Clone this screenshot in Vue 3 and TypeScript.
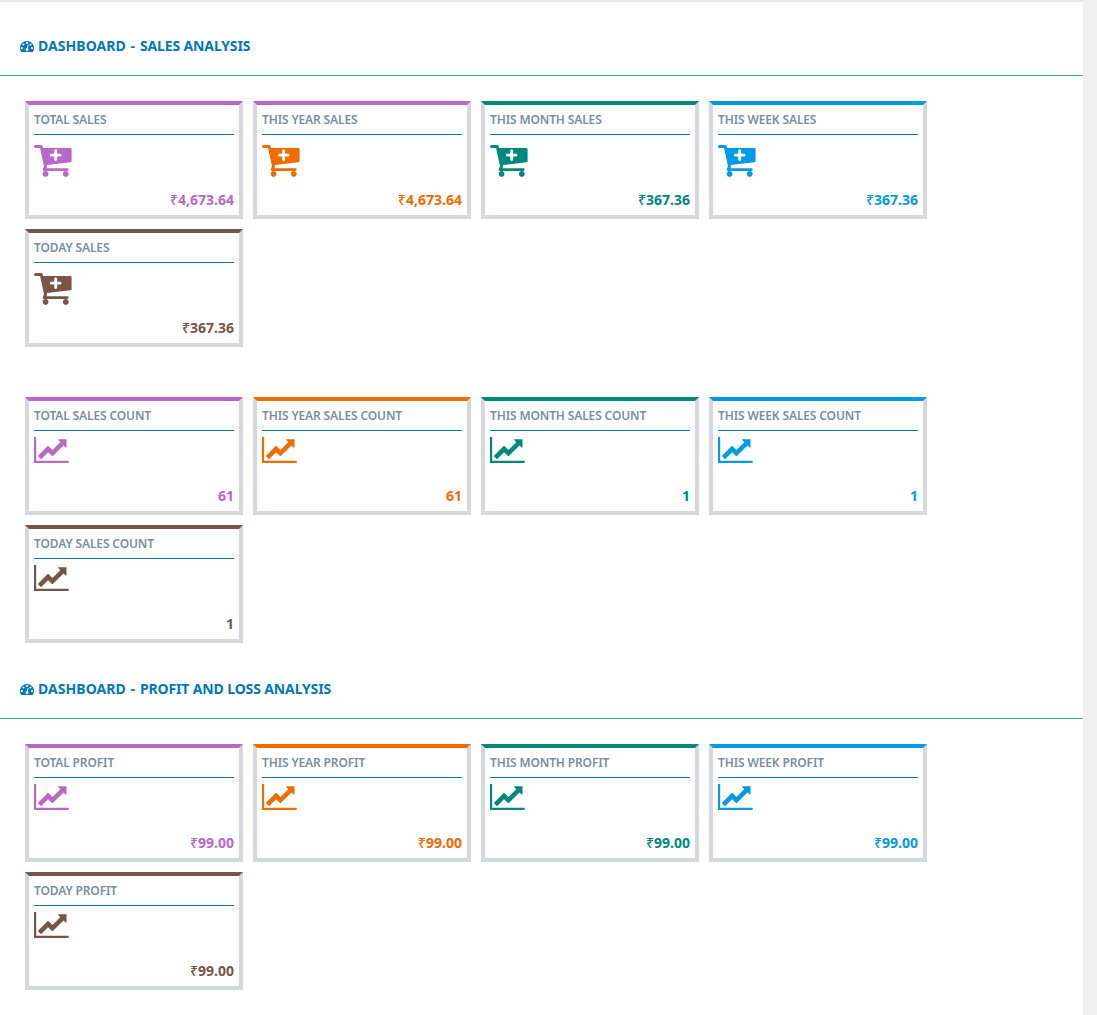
<script setup lang="ts">
type IconName = 'cart' | 'chart'

interface Card {
  title: string
  value: string
  tone: string
  edge?: string
  money?: boolean
}

interface Group {
  icon: IconName
  cards: Card[]
}

interface Section {
  name: string
  groups: Group[]
}

const icons: Record<IconName, { box: string; path: string }> = {
  cart: {
    box: '64 256 1664 1408',
    path: 'M1280 704q0-26-19-45t-45-19h-128v-128q0-26-19-45t-45-19-45 19-19 45v128h-128q-26 0-45 19t-19 45 19 45 45 19h128v128q0 26 19 45t45 19 45-19 19-45v-128h128q26 0 45-19t19-45zM704 1536q0 53-37.5 90.5t-90.5 37.5-90.5-37.5-37.5-90.5 37.5-90.5 90.5-37.5 90.5 37.5 37.5 90.5zm896 0q0 53-37.5 90.5t-90.5 37.5-90.5-37.5-37.5-90.5 37.5-90.5 90.5-37.5 90.5 37.5 37.5 90.5zm128-1088v512q0 24-16 42.5t-41 21.5l-1044 122q1 7 4.5 21.5t6 26.5 2.5 22q0 16-24 64h920q26 0 45 19t19 45-19 45-45 19h-1024q-26 0-45-19t-19-45q0-14 11-39.5t29.5-59.5 20.5-38l-177-823h-204q-26 0-45-19t-19-45 19-45 45-19h256q16 0 28.5 6.5t20 15.5 13 24.5 7.5 26.5 5.5 29.5 4.5 25.5h1201q26 0 45 19t19 45z',
  },
  chart: {
    box: '0 128 2048 1536',
    path: 'M2048 1536v128h-2048v-1536h128v1408h1920zm-128-1248v435q0 21-19.5 29.5t-35.5-7.5l-121-121-633 633q-10 10-23 10t-23-10l-233-233-416 416-192-192 585-585q10-10 23-10t23 10l233 233 464-464-121-121q-16-16-7.5-35.5t29.5-19.5h435q14 0 23 9t9 23z',
  },
}

const gauge =
  'M384 1152q0-53-37.5-90.5t-90.5-37.5-90.5 37.5-37.5 90.5 37.5 90.5 90.5 37.5 90.5-37.5 37.5-90.5zm192-448q0-53-37.5-90.5t-90.5-37.5-90.5 37.5-37.5 90.5 37.5 90.5 90.5 37.5 90.5-37.5 37.5-90.5zm428 481l101-382q6-26-7.5-48.5t-38.5-29.5-48 6.5-30 39.5l-101 382q-60 5-107 43.5t-63 98.5q-20 77 20 146t117 89 146-20 89-117q16-60-6-117t-72-91zm660-33q0-53-37.5-90.5t-90.5-37.5-90.5 37.5-37.5 90.5 37.5 90.5 90.5 37.5 90.5-37.5 37.5-90.5zm-640-640q0-53-37.5-90.5t-90.5-37.5-90.5 37.5-37.5 90.5 37.5 90.5 90.5 37.5 90.5-37.5 37.5-90.5zm448 192q0-53-37.5-90.5t-90.5-37.5-90.5 37.5-37.5 90.5 37.5 90.5 90.5 37.5 90.5-37.5 37.5-90.5zm320 448q0 261-141 483-19 29-54 29h-1402q-35 0-54-29-141-221-141-483 0-182 71-348t191-286 286-191 348-71 348 71 286 191 191 286 71 348z'

const sections: Section[] = [
  {
    name: 'SALES ANALYSIS',
    groups: [
      {
        icon: 'cart',
        cards: [
          { title: 'TOTAL SALES', value: '4,673.64', tone: 'purple', money: true },
          { title: 'THIS YEAR SALES', value: '4,673.64', tone: 'orange', edge: 'edge-purple', money: true },
          { title: 'THIS MONTH SALES', value: '367.36', tone: 'teal', money: true },
          { title: 'THIS WEEK SALES', value: '367.36', tone: 'blue', money: true },
          { title: 'TODAY SALES', value: '367.36', tone: 'brown', money: true },
        ],
      },
      {
        icon: 'chart',
        cards: [
          { title: 'TOTAL SALES COUNT', value: '61', tone: 'purple' },
          { title: 'THIS YEAR SALES COUNT', value: '61', tone: 'orange' },
          { title: 'THIS MONTH SALES COUNT', value: '1', tone: 'teal' },
          { title: 'THIS WEEK SALES COUNT', value: '1', tone: 'blue' },
          { title: 'TODAY SALES COUNT', value: '1', tone: 'brown' },
        ],
      },
    ],
  },
  {
    name: 'PROFIT AND LOSS ANALYSIS',
    groups: [
      {
        icon: 'chart',
        cards: [
          { title: 'TOTAL PROFIT', value: '99.00', tone: 'purple', money: true },
          { title: 'THIS YEAR PROFIT', value: '99.00', tone: 'orange', money: true },
          { title: 'THIS MONTH PROFIT', value: '99.00', tone: 'teal', money: true },
          { title: 'THIS WEEK PROFIT', value: '99.00', tone: 'blue', money: true },
          { title: 'TODAY PROFIT', value: '99.00', tone: 'brown', money: true },
        ],
      },
    ],
  },
]
</script>

<template>
  <div class="page">
    <main class="content">
      <section v-for="s in sections" :key="s.name">
        <h2 class="heading">
          <svg class="gauge" viewBox="0 256 1792 1408"><path :d="gauge" /></svg>
          <span><span class="lead">DASHBOARD</span> <span class="dash">-</span> <span class="name">{{ s.name }}</span></span>
        </h2>
        <div class="groups">
          <div v-for="(g, i) in s.groups" :key="i" class="cards">
            <article v-for="c in g.cards" :key="c.title" class="card" :class="[c.tone, c.edge]">
              <h3 class="title">{{ c.title }}</h3>
              <svg :class="g.icon" :viewBox="icons[g.icon].box"><path :d="icons[g.icon].path" /></svg>
              <div class="value"><span v-if="c.money" class="rupee">₹</span>{{ c.value }}</div>
            </article>
          </div>
        </div>
      </section>
    </main>
    <div class="gutter"></div>
  </div>
</template>

<style>
body {
  margin: 0;
  overflow: hidden;
}
</style>

<style scoped>
.page {
  display: flex;
  height: 1015px;
  overflow: hidden;
  background: #fff;
  font-family: 'Noto Sans', sans-serif;
}
.content {
  flex: 1;
  border-top: 2px solid #e4e9ec;
}
.gutter {
  width: 14px;
  background: #f0f0f0;
}
.heading {
  display: flex;
  align-items: center;
  gap: 4px;
  box-sizing: border-box;
  height: 74px;
  margin: 0;
  padding: 14px 20px 0;
  border-bottom: 1px solid #32b67a;
  color: #0277bd;
  font-size: 14px;
  font-weight: 700;
  line-height: 20px;
  white-space: nowrap;
}
.lead {
  letter-spacing: 0.06px;
}
.dash {
  margin: 0 1.3px 0 1px;
}
.name {
  letter-spacing: -0.13px;
}
.gauge {
  width: 14px;
  height: 11px;
  margin-top: 1px;
}
svg {
  display: block;
  fill: currentColor;
}
.groups {
  display: flex;
  flex-direction: column;
  gap: 50px;
  padding: 25px 25px 2px;
}
.cards {
  display: flex;
  flex-wrap: wrap;
  gap: 10px;
}
.card {
  display: flex;
  flex-direction: column;
  box-sizing: border-box;
  width: 218px;
  height: 118px;
  padding: 0 5px;
  border: 4px solid #d5d9dc;
  border-top-color: currentColor;
}
.purple {
  color: #ba68c8;
}
.orange {
  color: #ef6c00;
}
.teal {
  color: #00897b;
}
.blue {
  color: #039be5;
}
.brown {
  color: #795548;
}
.edge-purple {
  border-top-color: #ba68c8;
}
.title {
  box-sizing: border-box;
  height: 30px;
  margin: 0;
  border-bottom: 1px solid #0277bd;
  color: #78909c;
  font-size: 12px;
  font-weight: 600;
  letter-spacing: -0.13px;
  line-height: 29px;
  white-space: nowrap;
}
.cart {
  width: 37.6px;
  height: 31.8px;
  margin-top: 10.2px;
}
.chart {
  width: 34.7px;
  height: 26px;
  margin-top: 6px;
}
.value {
  margin-top: auto;
  padding-bottom: 5px;
  font-size: 14px;
  font-weight: 700;
  line-height: 20px;
  text-align: right;
}
.rupee {
  font-weight: 500;
}
</style>
